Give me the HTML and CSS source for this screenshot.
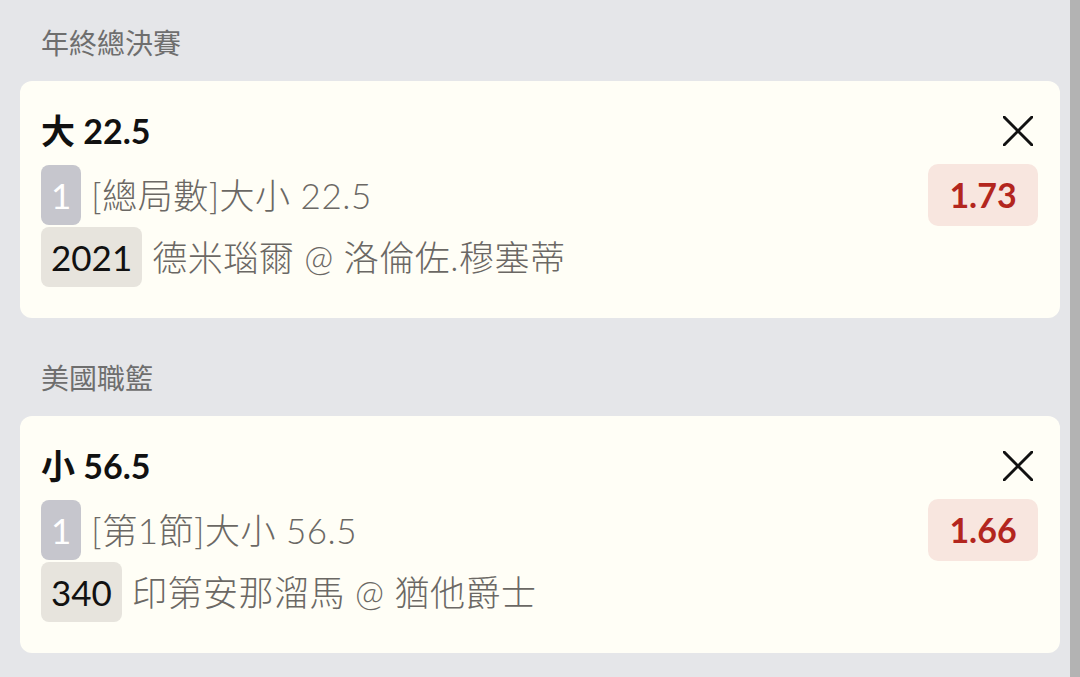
FILE: index.html
```html
<!DOCTYPE html>
<html lang="zh-Hant">
<head>
<meta charset="utf-8">
<link rel="stylesheet" href="styles.css">
</head>
<body>
<div class="page">
  <main class="list">
    <section class="group">
      <div class="group-label">年終總決賽</div>
      <div class="card">
        <div class="card-head">
          <div class="pick">大 22.5</div>
          <svg class="close" width="30" height="30" viewBox="0 0 30 30"><path d="M1 1 L29 29 M29 1 L1 29" stroke="#111" stroke-width="3" stroke-linecap="round" fill="none"/></svg>
        </div>
        <div class="row row-market">
          <span class="tag tag-num">1</span>
          <span class="desc">[總局數]大小 22.5</span>
          <span class="odds">1.73</span>
        </div>
        <div class="row">
          <span class="tag tag-id">2021</span>
          <span class="desc">德米瑙爾 @ 洛倫佐.穆塞蒂</span>
        </div>
      </div>
    </section>
    <section class="group">
      <div class="group-label">美國職籃</div>
      <div class="card">
        <div class="card-head">
          <div class="pick">小 56.5</div>
          <svg class="close" width="30" height="30" viewBox="0 0 30 30"><path d="M1 1 L29 29 M29 1 L1 29" stroke="#111" stroke-width="3" stroke-linecap="round" fill="none"/></svg>
        </div>
        <div class="row row-market">
          <span class="tag tag-num">1</span>
          <span class="desc">[第1節]大小 56.5</span>
          <span class="odds">1.66</span>
        </div>
        <div class="row">
          <span class="tag tag-id">340</span>
          <span class="desc">印第安那溜馬 @ 猶他爵士</span>
        </div>
      </div>
    </section>
  </main>
  <div class="scrollbar"></div>
</div>
</body>
</html>
```

FILE: styles.css
```css
html, body {
  margin: 0;
  padding: 0;
  height: 100%;
  overflow: hidden;
}
body {
  background: #e5e6e9;
  font-family: Lato, "Noto Sans CJK TC", sans-serif;
}
.page {
  display: flex;
  height: 677px;
}
.list {
  flex: 1;
  padding: 23px 10px 0 20px;
  display: flex;
  flex-direction: column;
  gap: 40px;
}
.scrollbar {
  width: 10px;
  background: #b3b3b3;
}
.group-label {
  height: 40px;
  line-height: 40px;
  font-size: 28px;
  color: #6e6e6e;
  padding-left: 21px;
  margin-bottom: 18px;
}
.card {
  background: #fffef6;
  border-radius: 12px;
  padding: 20px 22px 31px 21px;
}
.card-head {
  display: flex;
  align-items: center;
  justify-content: space-between;
  height: 60px;
  margin-bottom: 3px;
}
.pick {
  font-size: 34px;
  font-weight: 700;
  color: #111;
  line-height: 60px;
}
.close {
  margin-right: 5px;
  display: block;
}
.row {
  display: flex;
  align-items: center;
  height: 60px;
}
.row-market {
  height: 62px;
  margin-bottom: 1px;
}
.tag {
  height: 60px;
  line-height: 60px;
  font-size: 35px;
  padding: 0 10px;
  border-radius: 8px;
  box-sizing: border-box;
}
.tag-num {
  background: #c6c6cd;
  color: #fff;
}
.tag-id {
  background: #e7e4dd;
  color: #111;
}
.desc {
  margin-left: 10px;
  font-size: 35px;
  font-weight: 300;
  letter-spacing: 0.5px;
  color: #6b6864;
  line-height: 60px;
  flex: 1;
}
.odds {
  height: 62px;
  line-height: 62px;
  width: 110px;
  text-align: center;
  background: #f8e6df;
  color: #b3261e;
  font-weight: 700;
  font-size: 34px;
  border-radius: 10px;
}
```
